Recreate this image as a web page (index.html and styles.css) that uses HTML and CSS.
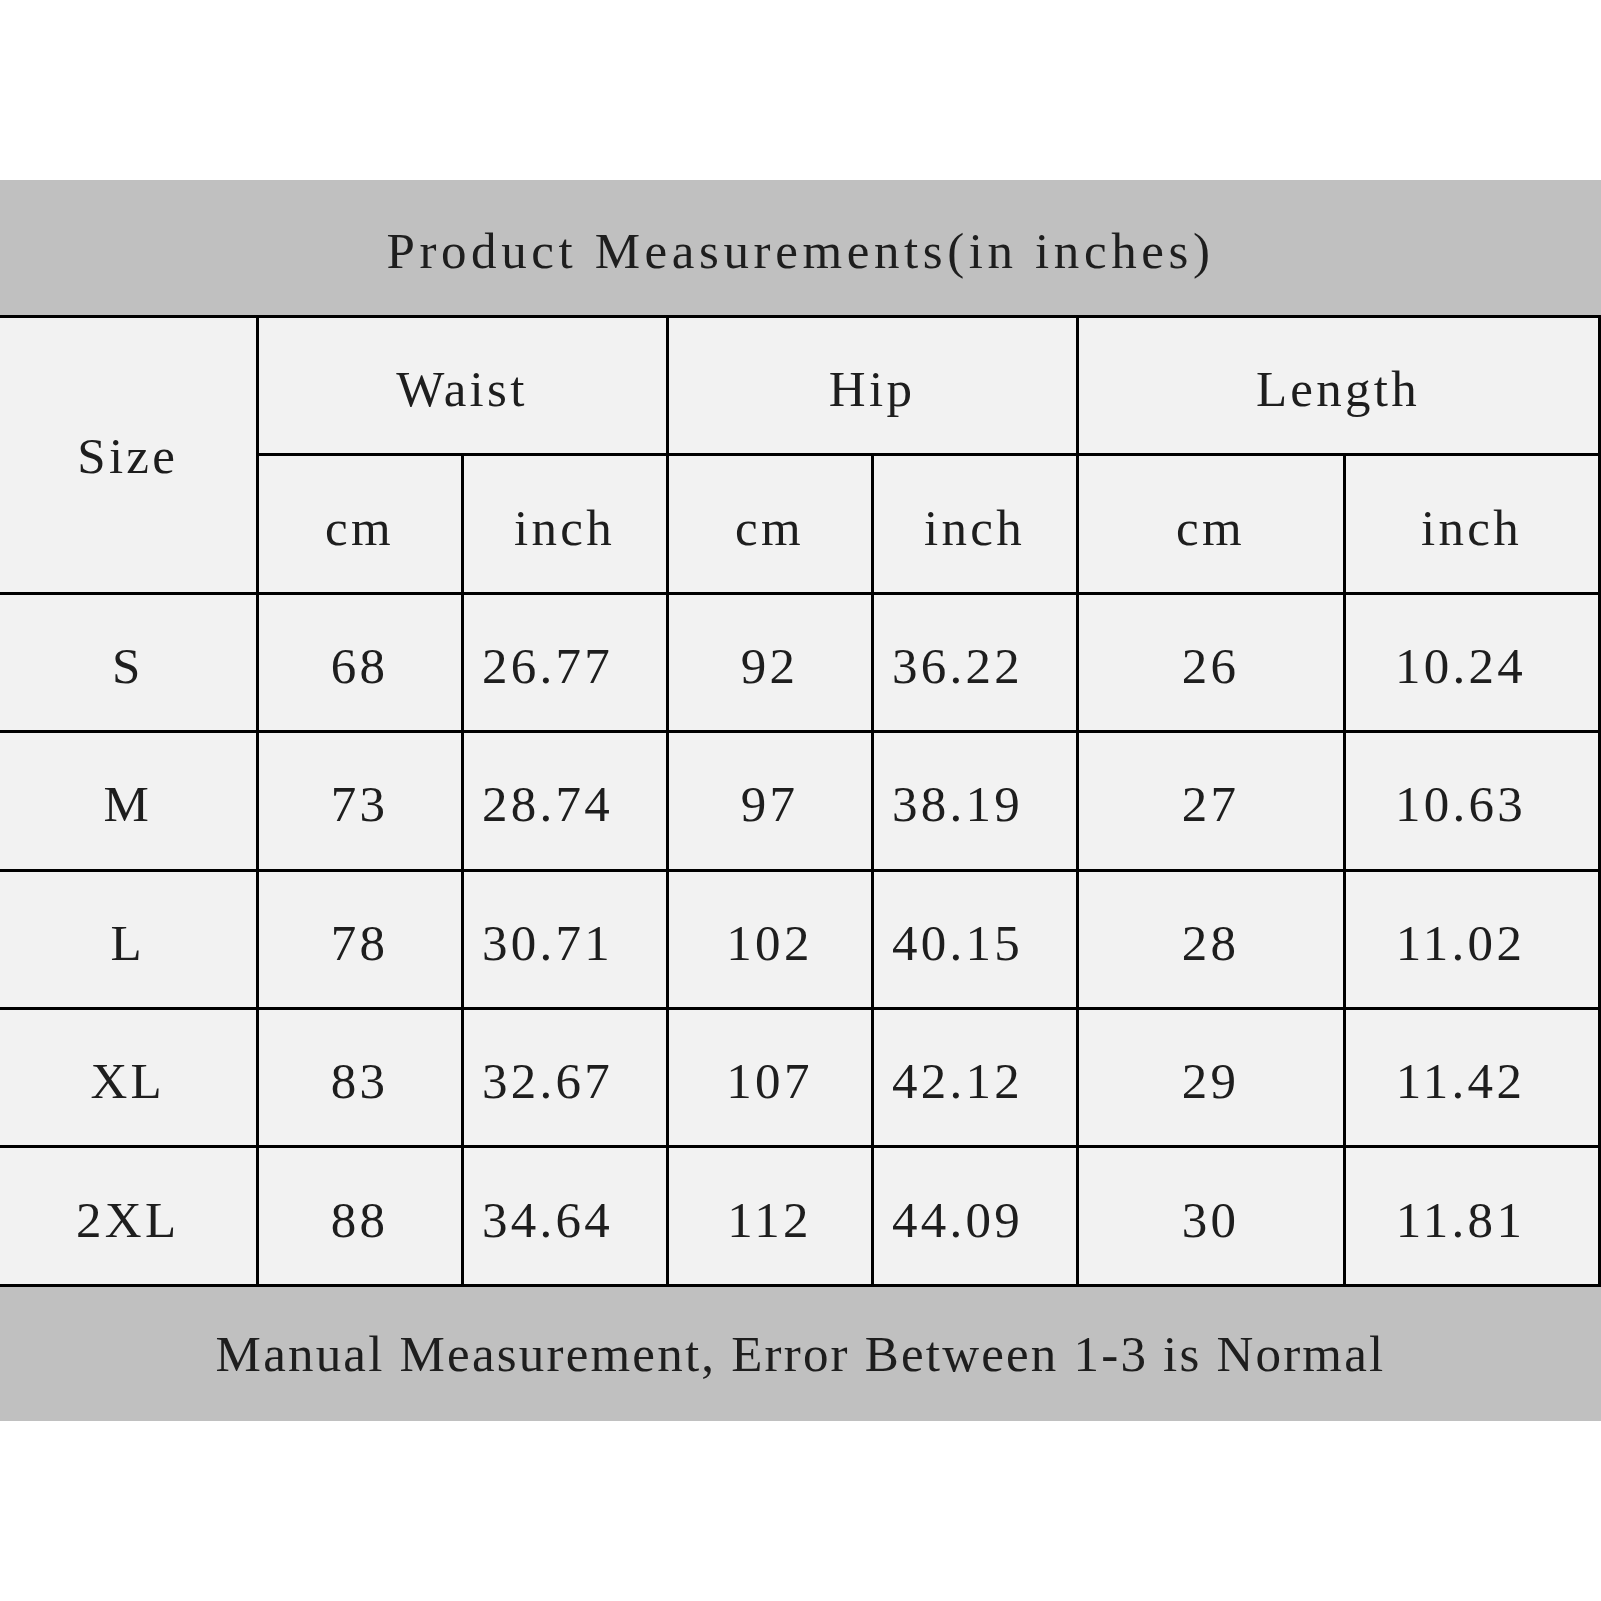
FILE: index.html
```html
<!DOCTYPE html>
<html lang="en">
<head>
<meta charset="utf-8">
<title>Product Measurements</title>
<link rel="stylesheet" href="styles.css">
</head>
<body>
<main class="chart">
  <div class="band band-top">Product Measurements(in inches)</div>
  <table class="sizes">
    <colgroup>
      <col class="c-size"><col class="c-n"><col class="c-n"><col class="c-n"><col class="c-n"><col class="c-l1"><col class="c-l2">
    </colgroup>
    <thead>
      <tr>
        <th rowspan="2" class="size-head">Size</th>
        <th colspan="2">Waist</th>
        <th colspan="2">Hip</th>
        <th colspan="2">Length</th>
      </tr>
      <tr>
        <th>cm</th><th>inch</th>
        <th>cm</th><th>inch</th>
        <th>cm</th><th class="last">inch</th>
      </tr>
    </thead>
    <tbody>
      <tr><td>S</td><td>68</td><td class="dec">26.77</td><td>92</td><td class="dec">36.22</td><td>26</td><td class="last dec">10.24</td></tr>
      <tr><td>M</td><td>73</td><td class="dec">28.74</td><td>97</td><td class="dec">38.19</td><td>27</td><td class="last dec">10.63</td></tr>
      <tr><td>L</td><td>78</td><td class="dec">30.71</td><td>102</td><td class="dec">40.15</td><td>28</td><td class="last dec">11.02</td></tr>
      <tr><td>XL</td><td>83</td><td class="dec">32.67</td><td>107</td><td class="dec">42.12</td><td>29</td><td class="last dec">11.42</td></tr>
      <tr><td>2XL</td><td>88</td><td class="dec">34.64</td><td>112</td><td class="dec">44.09</td><td>30</td><td class="last dec">11.81</td></tr>
    </tbody>
  </table>
  <div class="band band-bottom">Manual Measurement, Error Between 1-3 is Normal</div>
</main>
</body>
</html>
```

FILE: styles.css
```css
html, body {
  margin: 0;
  padding: 0;
  background: #ffffff;
}

body {
  font-family: "Liberation Serif", "Times New Roman", serif;
  color: #1e1e1e;
}

.chart {
  padding-top: 180px;
  width: 1601px;
}

.band {
  background: #c0c0c0;
  display: flex;
  align-items: center;
  justify-content: center;
  font-size: 51px;
  line-height: 1;
  box-sizing: border-box;
}

.band-top {
  height: 135px;
  letter-spacing: 4.6px;
  padding-top: 8px;
}

.band-bottom {
  height: 134px;
  letter-spacing: 2.2px;
  padding-top: 2px;
}

.sizes {
  table-layout: fixed;
  border-collapse: collapse;
  width: 1599px;
  background: #f2f2f2;
  border-top: 3px solid #000;
  border-right: 3px solid #000;
  border-bottom: 3px solid #000;
}

.c-size { width: 257px; }
.c-n { width: 205px; }
.c-l1 { width: 267px; }
.c-l2 { width: 255px; }

.sizes th,
.sizes td {
  border: 3px solid #000;
  text-align: center;
  vertical-align: middle;
  font-weight: normal;
  font-size: 51px;
  line-height: 1;
  letter-spacing: 3.3px;
  padding: 8px 0 0 0;
  height: 138.4px;
  box-sizing: border-box;
}

.sizes tr > :first-child {
  border-left: none;
}

.sizes .size-head {
  padding-top: 4px;
}

.sizes .dec {
  padding-right: 34px;
}

.sizes .last {
  padding-right: 0;
}

.sizes .last.dec {
  padding-right: 22px;
}
```
